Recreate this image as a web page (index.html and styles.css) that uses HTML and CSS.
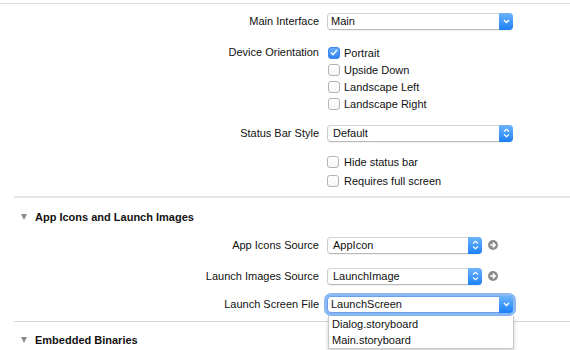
FILE: index.html
```html
<html>
  <head>
    <link rel="stylesheet" href="styles.css">
  </head>
  <body>
    <div class="rule rule--top"></div>

    <div class="row row--main">
      <span class="label">Main Interface</span>
      <div class="select">
        <span class="select__value">Main</span>
        <span class="select__btn">
          <svg width="7" height="5" viewBox="0 0 7 5"><path d="M1 1 L3.5 3.5 L6 1" fill="none" stroke="#fff" stroke-width="1.4"/></svg>
        </span>
      </div>
    </div>

    <div class="row row--orient">
      <span class="label label--top">Device Orientation</span>
      <div class="checks">
        <div class="check"><span class="box box--on"><svg width="8" height="7" viewBox="0 0 8 7"><path d="M1 3.6 L3 5.6 L7 1" fill="none" stroke="#fff" stroke-width="1.4"/></svg></span>Portrait</div>
        <div class="check"><span class="box"></span>Upside Down</div>
        <div class="check"><span class="box"></span>Landscape Left</div>
        <div class="check"><span class="box"></span>Landscape Right</div>
      </div>
    </div>

    <div class="row row--status">
      <span class="label">Status Bar Style</span>
      <div class="select">
        <span class="select__value select__value--popup">Default</span>
        <span class="select__btn">
          <svg width="7" height="10" viewBox="0 0 7 10"><path d="M1 3.5 L3.5 1.2 L6 3.5 M1 6.5 L3.5 8.8 L6 6.5" fill="none" stroke="#fff" stroke-width="1.2"/></svg>
        </span>
      </div>
    </div>

    <div class="row row--hide">
      <span class="label"></span>
      <div class="checks checks--wide">
        <div class="check"><span class="box"></span>Hide status bar</div>
        <div class="check"><span class="box"></span>Requires full screen</div>
      </div>
    </div>

    <div class="rule rule--thick"></div>

    <div class="section"><span class="disclosure"></span>App Icons and Launch Images</div>

    <div class="row row--icons">
      <span class="label">App Icons Source</span>
      <div class="select select--short">
        <span class="select__value select__value--popup">AppIcon</span>
        <span class="select__btn">
          <svg width="7" height="10" viewBox="0 0 7 10"><path d="M1 3.5 L3.5 1.2 L6 3.5 M1 6.5 L3.5 8.8 L6 6.5" fill="none" stroke="#fff" stroke-width="1.2"/></svg>
        </span>
      </div>
      <span class="go"><svg width="8" height="8" viewBox="0 0 8 8"><path d="M1.2 4 H6 M3.8 1.6 L6.2 4 L3.8 6.4" fill="none" stroke="#fff" stroke-width="1.5"/></svg></span>
    </div>

    <div class="row row--launch">
      <span class="label">Launch Images Source</span>
      <div class="select select--short">
        <span class="select__value select__value--popup">LaunchImage</span>
        <span class="select__btn">
          <svg width="7" height="10" viewBox="0 0 7 10"><path d="M1 3.5 L3.5 1.2 L6 3.5 M1 6.5 L3.5 8.8 L6 6.5" fill="none" stroke="#fff" stroke-width="1.2"/></svg>
        </span>
      </div>
      <span class="go"><svg width="8" height="8" viewBox="0 0 8 8"><path d="M1.2 4 H6 M3.8 1.6 L6.2 4 L3.8 6.4" fill="none" stroke="#fff" stroke-width="1.5"/></svg></span>
    </div>

    <div class="row row--screen">
      <span class="label">Launch Screen File</span>
      <div class="select select--focus">
        <span class="select__value">LaunchScreen</span>
        <span class="select__btn">
          <svg width="7" height="5" viewBox="0 0 7 5"><path d="M1 1 L3.5 3.5 L6 1" fill="none" stroke="#fff" stroke-width="1.4"/></svg>
        </span>
        <ul class="menu">
          <li>Dialog.storyboard</li>
          <li>Main.storyboard</li>
        </ul>
      </div>
    </div>

    <div class="rule rule--thin"></div>

    <div class="section section--last"><span class="disclosure"></span>Embedded Binaries</div>
  </body>
</html>
```

FILE: styles.css
```css
body {
	margin: 0;
	background: #fff;
	color: #111;
	font-family: "Liberation Sans", Arial, sans-serif;
	font-size: 11px;
	overflow: hidden;
}

.rule--top {
	margin-top: 3px;
	border-top: 1px solid #d9d9d9;
}

.rule--thick {
	margin: 6px 0 0 14px;
	border-top: 2px solid #e6e6e6;
}

.rule--thin {
	margin: 8px 0 0 14px;
	border-top: 1px solid #d6d6d6;
}

.row {
	display: flex;
	align-items: center;
	gap: 8px;
	height: 18px;
}

.row--main {
	margin-top: 8px;
}

.row--orient {
	margin-top: 14px;
	height: auto;
	align-items: flex-start;
}

.row--status {
	margin-top: 12px;
}

.row--hide {
	margin-top: 10px;
	height: auto;
	align-items: flex-start;
}

.row--icons {
	margin-top: 10px;
}

.row--launch {
	margin-top: 13px;
}

.row--screen {
	margin-top: 10px;
}

.label {
	flex: none;
	width: 319px;
	text-align: right;
	white-space: nowrap;
}

.label--top {
	line-height: 17px;
}

.checks .check {
	display: flex;
	align-items: center;
	gap: 4px;
	height: 17px;
	padding-left: 1px;
}

.checks--wide .check {
	height: 19px;
	padding-left: 0;
	gap: 5px;
}

.box {
	box-sizing: border-box;
	width: 12px;
	height: 12px;
	border: 1px solid #b4b4b4;
	border-radius: 3px;
	background: linear-gradient(#fff, #f6f6f6);
	display: flex;
	align-items: center;
	justify-content: center;
}

.box--on {
	border-color: #3a86ee;
	background: linear-gradient(#69acfa, #2f84f5);
}

.select {
	position: relative;
	box-sizing: border-box;
	width: 186px;
	height: 17px;
	display: flex;
	align-items: center;
	border: 1px solid #cacaca;
	border-top-color: #d6d6d6;
	border-bottom-color: #b9b9b9;
	border-radius: 4px;
	background: #fff;
	box-shadow: 0 1px 1px rgba(0, 0, 0, 0.06);
}

.select--short {
	width: 155px;
}

.select--focus {
	box-shadow: 0 0 0 3px #8bb8f2;
	border-color: #6aa0e8;
}

.select__value {
	flex: 1;
	padding-left: 3px;
	white-space: nowrap;
}

.select__value--popup {
	padding-left: 5px;
}

.select__btn {
	align-self: stretch;
	width: 14px;
	margin: -1px -1px -1px 0;
	border-radius: 0 4px 4px 0;
	background: linear-gradient(#6db5fb, #1b80fa);
	display: flex;
	align-items: center;
	justify-content: center;
}

.go {
	width: 10px;
	height: 10px;
	margin-left: -2px;
	border-radius: 50%;
	background: #8c8c8c;
	display: flex;
	align-items: center;
	justify-content: center;
}

.menu {
	position: absolute;
	top: 19px;
	left: 0;
	width: 184px;
	margin: 0;
	padding: 0;
	list-style: none;
	background: #fff;
	border: 1px solid #c9c9c9;
	border-top: 0;
	box-shadow: 0 2px 4px rgba(0, 0, 0, 0.2);
	z-index: 2;
}

.menu li {
	height: 16px;
	line-height: 16px;
	padding-left: 3px;
}

.section {
	display: flex;
	align-items: center;
	gap: 8px;
	height: 18px;
	margin-top: 10px;
	padding-left: 21px;
	font-weight: bold;
	color: #111;
}

.section--last {
	margin-top: 9px;
}

.disclosure {
	width: 0;
	height: 0;
	border-left: 3.5px solid transparent;
	border-right: 3.5px solid transparent;
	border-top: 6px solid #8a8a8a;
}
```
